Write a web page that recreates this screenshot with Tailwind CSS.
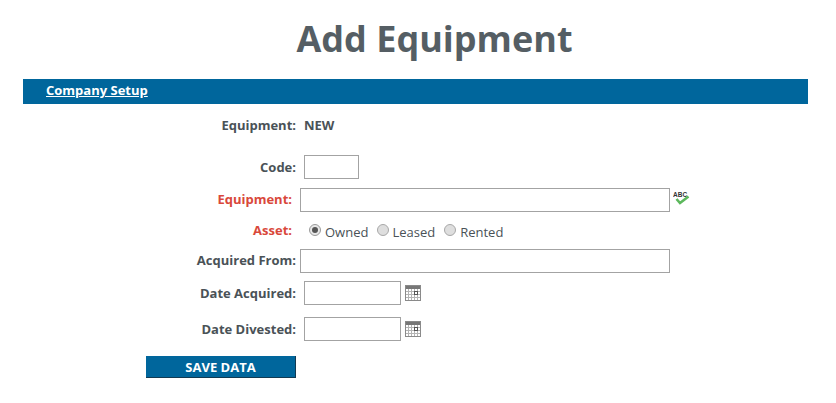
<!DOCTYPE html>
<html lang="en">
<head>
  <meta charset="UTF-8" />
  <title>Add Equipment</title>
  <script src="https://cdn.jsdelivr.net/npm/@tailwindcss/browser@4"></script>
</head>
<body class="bg-white min-h-screen font-['Open_Sans',sans-serif] text-[13px] text-[#4a5257]">
  <div class="px-[23px] pr-[28px] pt-[15px]">
    <h1 class="text-[36px] leading-[48px] font-bold text-center text-[#555e64] pl-[38px]">Add Equipment</h1>

    <div class="mt-[16px] h-[25px] bg-[#00669c] pl-[23px] text-white font-bold leading-[23px]">
      <a href="#" class="underline">Company Setup</a>
    </div>

    <div class="mt-[12px] flex items-center h-[20px]">
      <div class="w-[273px] text-right font-bold">Equipment:</div>
      <div class="ml-[8px] font-bold">NEW</div>
    </div>

    <div class="mt-[19px] flex items-center h-[24px]">
      <div class="w-[273px] text-right font-bold mt-[2px]">Code:</div>
      <input type="text" class="ml-[8px] w-[55px] h-[24px] bg-white border border-[#a3a3a3]" />
    </div>

    <div class="mt-[9px] flex items-center h-[24px]">
      <div class="w-[269px] text-right font-bold text-[#d9483b]">Equipment:</div>
      <input type="text" class="ml-[8px] w-[370px] h-[24px] bg-white border border-[#a3a3a3]" />
      <svg class="ml-[3px] mb-[5px]" width="18" height="16" viewBox="0 0 18 16">
        <text x="0" y="6.5" font-family="'Liberation Sans', sans-serif" font-size="6.5" font-weight="700" fill="#333">ABC</text>
        <path d="M3.5 9 L7 13 L15.5 6.5" fill="none" stroke="#5cb85c" stroke-width="2.6" />
      </svg>
    </div>

    <div class="mt-[7px] flex items-center h-[24px]">
      <div class="w-[269px] text-right font-bold text-[#d9483b]">Asset:</div>
      <label class="ml-[17px] flex items-center">
        <span class="w-[12px] h-[12px] rounded-full border border-[#9a9a9a] bg-[#e8e8e8] flex items-center justify-center mb-[3px]">
          <span class="w-[6px] h-[6px] rounded-full bg-[#555]"></span>
        </span>
        <span class="ml-[4px] mt-[3px]">Owned</span>
      </label>
      <label class="ml-[9px] flex items-center">
        <span class="w-[12px] h-[12px] rounded-full border border-[#a8a8a8] bg-[#dedede] mb-[3px]"></span>
        <span class="ml-[3px] mt-[3px]">Leased</span>
      </label>
      <label class="ml-[9px] flex items-center">
        <span class="w-[12px] h-[12px] rounded-full border border-[#a8a8a8] bg-[#dedede] mb-[3px]"></span>
        <span class="ml-[4px] mt-[3px]">Rented</span>
      </label>
    </div>

    <div class="mt-[6px] flex items-center h-[24px]">
      <div class="w-[273px] text-right font-bold">Acquired From:</div>
      <input type="text" class="ml-[4px] w-[370px] h-[24px] bg-white border border-[#a3a3a3]" />
    </div>

    <div class="mt-[8px] flex items-center h-[24px]">
      <div class="w-[273px] text-right font-bold mt-[2px]">Date Acquired:</div>
      <input type="text" class="ml-[8px] w-[97px] h-[24px] bg-white border border-[#a3a3a3]" />
      <svg class="ml-[4px]" width="16" height="16" viewBox="0 0 16 16">
        <rect x="0.5" y="0.5" width="15" height="15" fill="#fff" stroke="#8a8a8a" />
        <rect x="1" y="1" width="14" height="3" fill="#777" />
        <path d="M1 6.5H15M1 9.5H15M1 12.5H15M3.5 4V15M6.5 4V15M9.5 4V15M12.5 4V15" stroke="#b4b4b4" stroke-width="1" fill="none" />
        <rect x="9.5" y="6.5" width="3" height="3" fill="none" stroke="#555" />
      </svg>
    </div>

    <div class="mt-[12px] flex items-center h-[24px]">
      <div class="w-[273px] text-right font-bold mt-[2px]">Date Divested:</div>
      <input type="text" class="ml-[8px] w-[97px] h-[24px] bg-white border border-[#a3a3a3]" />
      <svg class="ml-[4px]" width="16" height="16" viewBox="0 0 16 16">
        <rect x="0.5" y="0.5" width="15" height="15" fill="#fff" stroke="#8a8a8a" />
        <rect x="1" y="1" width="14" height="3" fill="#777" />
        <path d="M1 6.5H15M1 9.5H15M1 12.5H15M3.5 4V15M6.5 4V15M9.5 4V15M12.5 4V15" stroke="#b4b4b4" stroke-width="1" fill="none" />
        <rect x="9.5" y="6.5" width="3" height="3" fill="none" stroke="#555" />
      </svg>
    </div>

    <button class="block mt-[15px] ml-[123px] w-[150px] h-[22px] bg-[#00669c] border-b border-r border-[#123a52] text-white font-bold text-[13px] leading-[20px]">SAVE DATA</button>
  </div>
</body>
</html>
